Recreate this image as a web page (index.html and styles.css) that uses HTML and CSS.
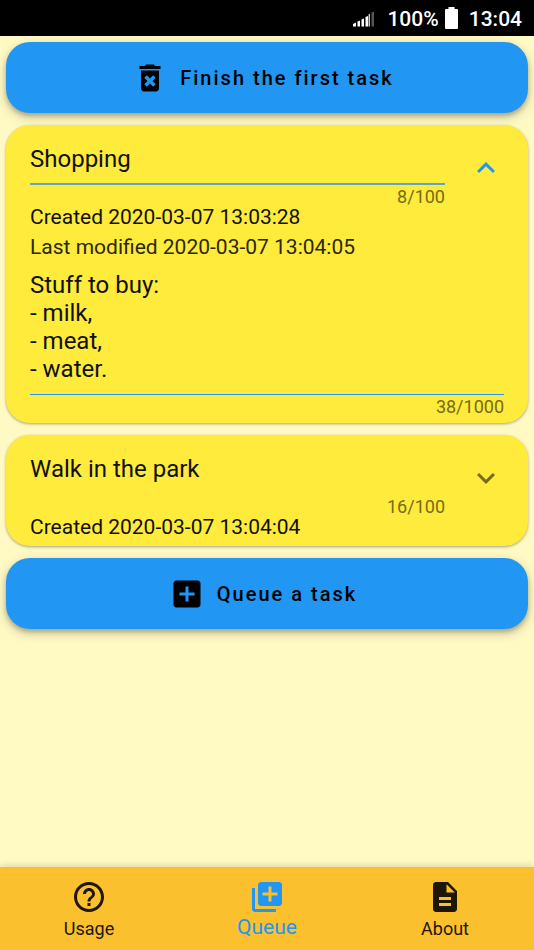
FILE: index.html
```html
<!DOCTYPE html>
<html lang="en">
<head>
<meta charset="utf-8">
<meta name="viewport" content="width=device-width, initial-scale=1">
<title>Task queue</title>
<link rel="stylesheet" href="styles.css">
</head>
<body>
<header class="status">
  <svg class="signal" viewBox="0 0 22 16" aria-hidden="true">
    <path fill="#fff" d="M0 13l3-1.500v4H0zM4.500 10.500l2.500-1v6H4.500zM8.500 8.500l2.500-1v8H8.500zM12.500 6l2.500-1v10.500h-2.500z"/>
    <path fill="#ccc" d="M15.500 3.500l1.500-1v13h-1.500z"/>
    <path fill="#555" d="M18.500 1.500L21 .5v15h-2.500z"/>
  </svg>
  <span>100%</span>
  <svg class="battery" viewBox="0 0 13 22" aria-hidden="true"><path fill="#fff" d="M3.500 0h6v2H12q1 0 1 1v18q0 1-1 1H1q-1 0-1-1V3q0-1 1-1h2.500z"/></svg>
  <time>13:04</time>
</header>

<main class="queue">
  <button class="action" type="button">
    <svg class="action-icon" viewBox="0 0 24 24" aria-hidden="true"><path fill-rule="evenodd" d="M6 19c0 1.100.9 2 2 2h8c1.100 0 2-.9 2-2V7H6v12zm2.200-7.100l1.700-1.700L12 12.300l2.100-2.100 1.700 1.700L13.700 14l2.100 2.100-1.700 1.700L12 15.700l-2.100 2.100-1.700-1.700L10.300 14l-2.100-2.100zM15.500 4l-1-1h-5l-1 1H5v2h14V4z"/></svg>
    <span>Finish the first task</span>
  </button>

  <article class="card">
    <div class="card-head">
      <div class="field">
        <input class="title underlined" type="text" aria-label="Task title" maxlength="100" value="Shopping">
        <span class="counter">8/100</span>
      </div>
      <button class="toggle open" type="button" aria-label="Collapse">
        <svg viewBox="0 0 24 24" aria-hidden="true"><path d="M12 8l-6 6 1.410 1.410L12 10.830l4.590 4.580L18 14z"/></svg>
      </button>
    </div>
    <p class="date">Created 2020-03-07 13:03:28</p>
    <p class="date modified">Last modified 2020-03-07 13:04:05</p>
    <div class="field">
      <textarea class="notes" rows="4" aria-label="Task description" maxlength="1000">Stuff to buy:
- milk,
- meat,
- water.</textarea>
      <span class="counter notes-counter">38/1000</span>
    </div>
  </article>

  <article class="card">
    <div class="card-head">
      <div class="field">
        <input class="title" type="text" aria-label="Task title" maxlength="100" value="Walk in the park">
        <span class="counter">16/100</span>
      </div>
      <button class="toggle" type="button" aria-label="Expand">
        <svg viewBox="0 0 24 24" aria-hidden="true"><path d="M16.590 8.590L12 13.170 7.410 8.590 6 10l6 6 6-6z"/></svg>
      </button>
    </div>
    <p class="date">Created 2020-03-07 13:04:04</p>
  </article>

  <button class="action" type="button">
    <svg class="action-icon" viewBox="0 0 24 24" aria-hidden="true"><path d="M19 3H5c-1.110 0-2 .9-2 2v14c0 1.100.89 2 2 2h14c1.100 0 2-.9 2-2V5c0-1.100-.9-2-2-2zm-2 10h-4v4h-2v-4H7v-2h4V7h2v4h4v2z"/></svg>
    <span>Queue a task</span>
  </button>
</main>

<nav class="tabs">
  <a class="tab" href="#usage">
    <svg viewBox="0 0 24 24" aria-hidden="true"><path d="M11 18h2v-2h-2v2zm1-16C6.480 2 2 6.480 2 12s4.480 10 10 10 10-4.480 10-10S17.520 2 12 2zm0 18c-4.410 0-8-3.590-8-8s3.590-8 8-8 8 3.590 8 8-3.590 8-8 8zm0-14c-2.210 0-4 1.790-4 4h2c0-1.100.9-2 2-2s2 .9 2 2c0 2-3 1.750-3 5h2c0-2.250 3-2.500 3-5 0-2.210-1.790-4-4-4z"/></svg>
    <span>Usage</span>
  </a>
  <a class="tab current" href="#queue" aria-current="page">
    <svg viewBox="0 0 24 24" aria-hidden="true"><path d="M4 6H2v14c0 1.100.9 2 2 2h14v-2H4V6zm16-4H8c-1.100 0-2 .9-2 2v12c0 1.100.9 2 2 2h12c1.100 0 2-.9 2-2V4c0-1.100-.9-2-2-2zm-1 9h-4v4h-2v-4H9V9h4V5h2v4h4v2z"/></svg>
    <span>Queue</span>
  </a>
  <a class="tab" href="#about">
    <svg viewBox="0 0 24 24" aria-hidden="true"><path d="M14 2H6c-1.100 0-1.990.9-1.990 2L4 20c0 1.100.89 2 1.990 2H18c1.100 0 2-.9 2-2V8l-6-6zm2 16H8v-2h8v2zm0-4H8v-2h8v2zm-3-5V3.500L18.500 9H13z"/></svg>
    <span>About</span>
  </a>
</nav>
</body>
</html>
```

FILE: styles.css
```css
* {
  box-sizing: border-box;
}

body {
  margin: 0;
  min-height: 100vh;
  display: flex;
  flex-direction: column;
  background: #fff9c4;
  color: #111;
  font-family: Roboto, "Noto Sans", sans-serif;
}

button,
input,
textarea {
  margin: 0;
  padding: 0;
  border: 0;
  background: none;
  color: inherit;
  font: inherit;
}

svg {
  display: block;
  fill: currentColor;
}

.status {
  display: flex;
  align-items: center;
  justify-content: flex-end;
  height: 36px;
  padding: 2px 12px 0;
  background: #000;
  color: #fff;
  font-size: 21px;
  font-weight: 500;
}

.signal {
  width: 22px;
  height: 16px;
  margin-right: 12px;
}

.battery {
  width: 13px;
  height: 22px;
  margin: 0 11px 2px 6px;
}

.queue {
  flex: 1;
  display: flex;
  flex-direction: column;
  gap: 12px;
  padding: 6px;
}

.action {
  display: flex;
  align-items: center;
  justify-content: center;
  gap: 12px;
  min-height: 71px;
  padding-right: 8px;
  border-radius: 24px;
  background: #2196f3;
  color: #000;
  font-size: 20px;
  font-weight: 500;
  letter-spacing: 2px;
  box-shadow: 0 3px 4px rgba(0, 0, 0, 0.2), 0 4px 12px rgba(0, 0, 0, 0.2);
}

.action-icon {
  width: 36px;
  height: 36px;
}

.card {
  position: relative;
  padding: 0 24px 4px;
  border-radius: 24px;
  background: #ffeb3b;
  box-shadow: 0 1px 3px rgba(0, 0, 0, 0.35);
}

.card-head {
  display: flex;
}

.field {
  flex: 1;
  min-width: 0;
  display: flex;
  flex-direction: column;
}

.title {
  width: 100%;
  height: 60px;
  padding-top: 9px;
  border-bottom: 2px solid transparent;
  font-size: 24px;
}

.notes {
  display: block;
  width: 100%;
  padding: 9px 0 11px;
  border-bottom: 1px solid #2196f3;
  font-size: 24px;
  line-height: 28px;
  resize: none;
  overflow: hidden;
}

.underlined {
  border-bottom-color: #5ea5cc;
}

.counter {
  align-self: flex-end;
  margin-bottom: -7px;
  color: #756c1b;
  font-size: 18px;
  line-height: 24px;
}

.notes-counter {
  margin-bottom: 0;
}

.toggle {
  width: 36px;
  height: 36px;
  margin: 25px 0 0 23px;
  color: #756c1b;
}

.toggle.open {
  color: #2196f3;
}

.date {
  margin: 0;
  font-size: 21px;
  line-height: 30px;
}

.modified {
  color: #2b280a;
}

.tabs {
  display: flex;
  min-height: 83px;
  background: #fbc02d;
  box-shadow: 0 0 8px rgba(0, 0, 0, 0.2);
}

.tab {
  flex: 1;
  display: flex;
  flex-direction: column;
  align-items: center;
  gap: 4px;
  padding-top: 12px;
  color: #1e1705;
  font-size: 18px;
  line-height: 20px;
  text-decoration: none;
}

.tab svg {
  width: 36px;
  height: 36px;
}

.tab.current {
  gap: 2px;
  color: #2196f3;
  font-size: 21px;
}
```
